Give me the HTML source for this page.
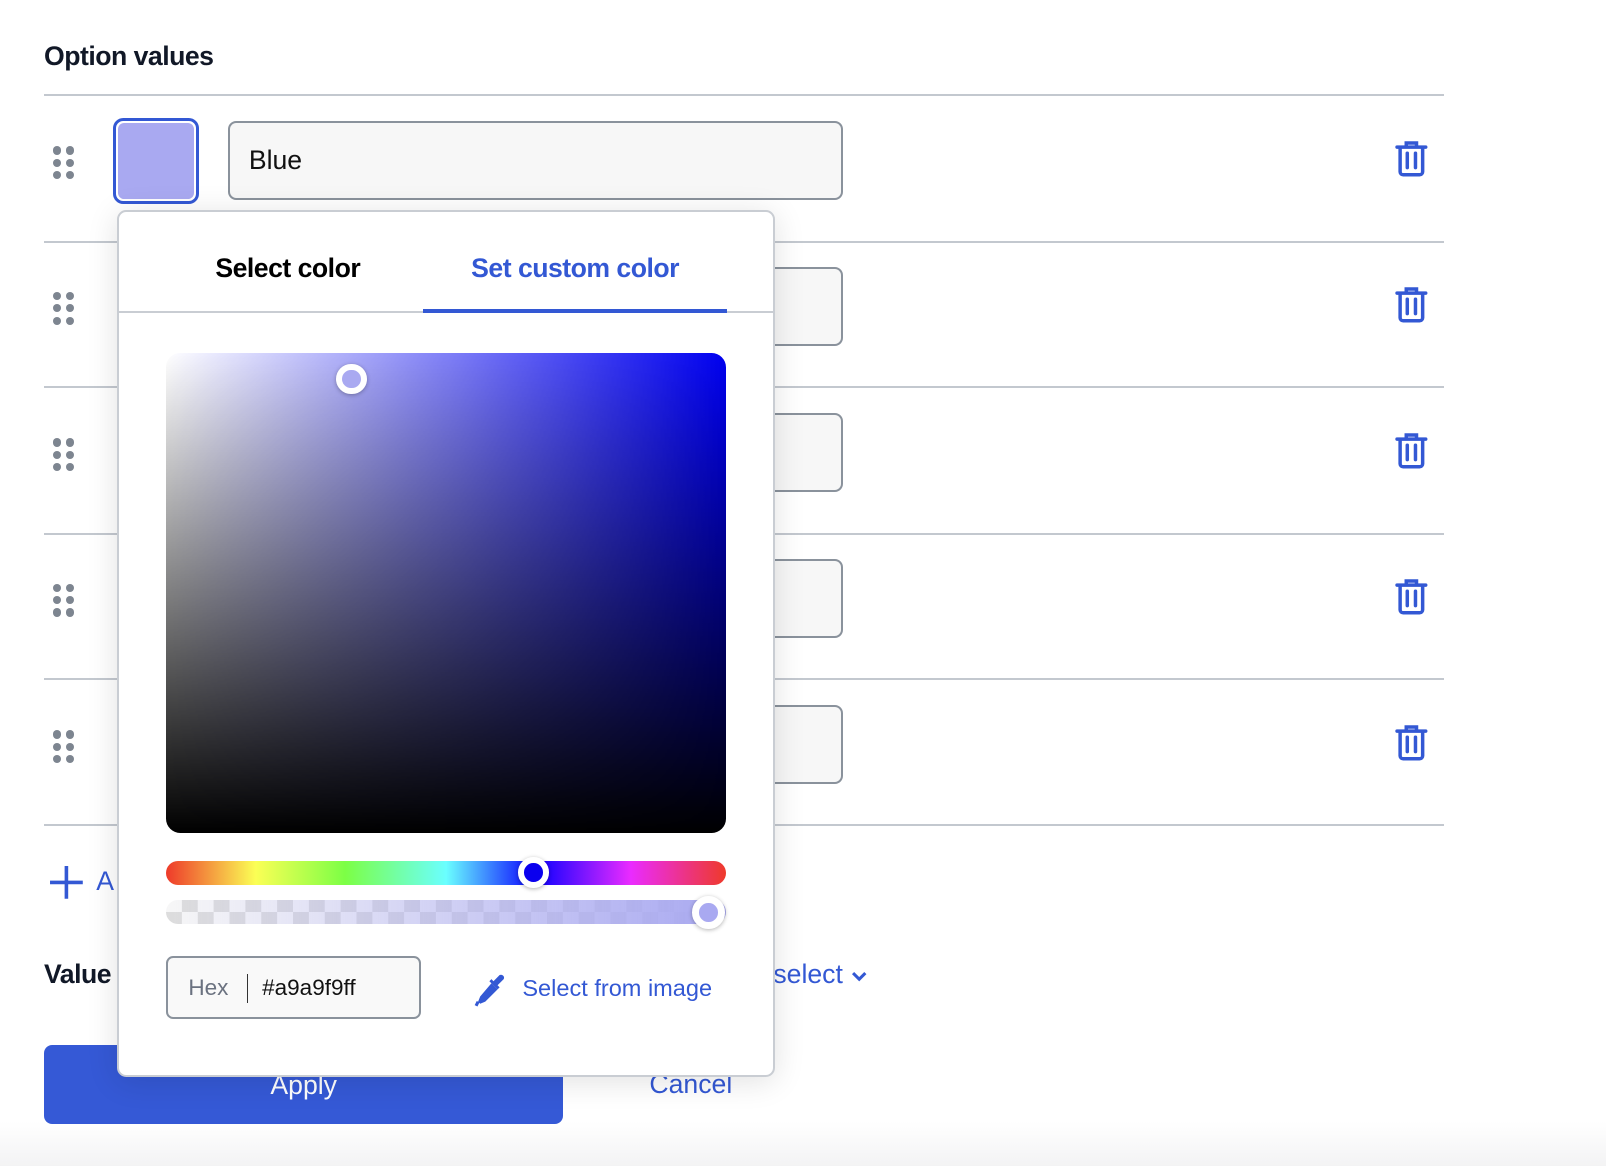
<!DOCTYPE html>
<html><head><meta charset="utf-8"><style>
*{box-sizing:border-box;margin:0;padding:0}
html,body{width:1606px;height:1166px;overflow:hidden;background:#fff}
#w{zoom:1.0243;position:relative;width:1568px;height:1139px;font-family:"Liberation Sans",sans-serif;background:linear-gradient(#fff 1095px,#f3f3f4 1139px)}
.a{position:absolute}
.line{position:absolute;left:43px;width:1367px;height:2px;background:#c3c8cf}
.dots{position:absolute;left:52px;width:22px;height:32px}
.dots i{position:absolute;width:8px;height:8px;border-radius:50%;background:#7d8590}
.inp{position:absolute;left:223px;width:600px;height:77px;background:#f7f7f7;border:2px solid #8a929c;border-radius:8px}
.trash{position:absolute;left:1362px}
.blue{color:#3358d4}
</style></head><body><div id="w">
<div class="a" style="left:43px;top:40px;font-size:26px;font-weight:bold;color:#111827;letter-spacing:-0.5px">Option values</div>
<div class="line" style="top:92px"></div>
<div class="line" style="top:235px"></div>
<div class="line" style="top:377px"></div>
<div class="line" style="top:520px"></div>
<div class="line" style="top:662px"></div>
<div class="line" style="top:804px"></div>

<div id="rows"></div>
<div class="a" style="left:110px;top:115px;width:84px;height:84px;border:3px solid #3358d4;border-radius:10px;padding:2px"><div style="width:100%;height:100%;background:#a9a9f1;border-radius:6px"></div></div>
<div class="inp" style="top:118px"><div style="position:absolute;left:18px;top:22px;font-size:26px;color:#111">Blue</div></div>
<div class="inp" style="top:261px"></div>
<div class="inp" style="top:403px"></div>
<div class="inp" style="top:546px"></div>
<div class="inp" style="top:688px"></div>

<svg class="a" style="left:48px;top:844px" width="34" height="34" viewBox="0 0 34 34"><path d="M17 1v32M1 17h32" stroke="#3358d4" stroke-width="3.5"/></svg>
<div class="a blue" style="left:94px;top:845px;font-size:26px">A</div>
<div class="a" style="left:43px;top:936px;font-size:26px;font-weight:bold;color:#111827;letter-spacing:-0.5px">Value</div>
<div class="a blue" style="left:755px;top:936px;font-size:26px">select <svg width="18" height="12" viewBox="0 0 18 12" style="vertical-align:middle"><path d="M3 3l6 6 6-6" stroke="#3358d4" stroke-width="3" fill="none"/></svg></div>
<div class="a" style="left:43px;top:1020px;width:507px;height:77px;background:#3559d6;border-radius:8px;color:#fff;font-size:26px;text-align:center;line-height:80px">Apply</div>
<div class="a blue" style="left:634px;top:1044px;font-size:26px">Cancel</div>

<div class="a" style="left:114px;top:205px;width:643px;height:846px;background:#fff;border:2px solid #c9cdd3;border-radius:9px;box-shadow:0 4px 30px rgba(0,0,0,.12)">
 <div class="a" style="left:0;width:330px;top:40px;text-align:center;font-size:26px;font-weight:bold;color:#000;letter-spacing:-0.5px">Select color</div>
 <div class="a blue" style="left:297px;width:297px;top:40px;text-align:center;font-size:26px;font-weight:bold;letter-spacing:-0.5px">Set custom color</div>
 <div class="a" style="left:0;right:0;top:97px;height:2px;background:#c9cdd3"></div>
 <div class="a" style="left:297px;width:297px;top:95px;height:4px;background:#3358d4"></div>
 <div class="a" style="left:46px;top:138px;width:547px;height:468px;border-radius:14px;overflow:hidden;background:linear-gradient(to top,#000,rgba(0,0,0,0)),linear-gradient(to right,#fff,#0000f0)"></div>
 <div class="a" style="left:212px;top:148px;width:30px;height:30px;border-radius:50%;border:6px solid #fff;background:#a9a9f1;box-shadow:0 1px 4px rgba(0,0,0,.3)"></div>
 <div class="a" style="left:46px;top:634px;width:547px;height:23px;border-radius:12px;background:linear-gradient(to right,#ee3a2a,#fbff55 16%,#7cff45 32%,#6affff 50%,#0a00ff 66%,#ea2bff 83%,#ee3a2a)"></div>
 <div class="a" style="left:390px;top:630px;width:30px;height:30px;border-radius:50%;border:6px solid #fff;background:#0a00ee;box-shadow:0 1px 4px rgba(0,0,0,.3)"></div>
 <div class="a" style="left:46px;top:672px;width:547px;height:23px;border-radius:12px;background:linear-gradient(to right,rgba(169,169,241,0),#a9a9f1),repeating-conic-gradient(#ddd 0 25%,#f7f7f7 0 50%) 0 0/31px 23px"></div>
 <div class="a" style="left:560px;top:668px;width:32px;height:32px;border-radius:50%;border:7px solid #fff;background:#a9a9f1;box-shadow:0 1px 4px rgba(0,0,0,.3)"></div>
 <div class="a" style="left:46px;top:726px;width:249px;height:62px;border:2px solid #8a929c;border-radius:7px;background:#f9f9f9">
  <div class="a" style="left:20px;top:17px;font-size:22px;color:#6b7280">Hex</div>
  <div class="a" style="left:77px;top:16px;width:1px;height:28px;background:#333"></div>
  <div class="a" style="left:92px;top:17px;font-size:22px;color:#111">#a9a9f9ff</div>
 </div>
 <svg class="a" style="left:346px;top:743px" width="34" height="34" viewBox="0 0 34 34"><path d="M18 10l6 6-12 12-5 2-2-2 2-5z" fill="#3358d4"/><path d="M20 8l6-6a3 3 0 014 4l-6 6 2 2-2 2-8-8 2-2z" fill="#3358d4"/><path d="M5 28l-2 4" stroke="#3358d4" stroke-width="3"/></svg>
 <div class="a blue" style="left:394px;top:745px;font-size:23px">Select from image</div>
</div>
</div>
<script>
var w=document.getElementById('rows'),h='';
[158,300,443,585,728].forEach(function(c){
 h+='<div class="dots" style="top:'+(c-15)+'px">';
 [0,12,24].forEach(function(y){h+='<i style="left:0;top:'+y+'px"></i><i style="left:12px;top:'+y+'px"></i>'});
 h+='</div><svg class="trash" style="top:'+(c-20)+'px" width="32" height="36" viewBox="0 0 32 36"><path d="M11 5V2h10v3M2 6h28M5 6v24a3 3 0 003 3h16a3 3 0 003-3V6M12 12v14M20 12v14" fill="none" stroke="#3358d4" stroke-width="3.4" stroke-linecap="round"/></svg>';
});
w.innerHTML=h;
</script>
</body></html>
